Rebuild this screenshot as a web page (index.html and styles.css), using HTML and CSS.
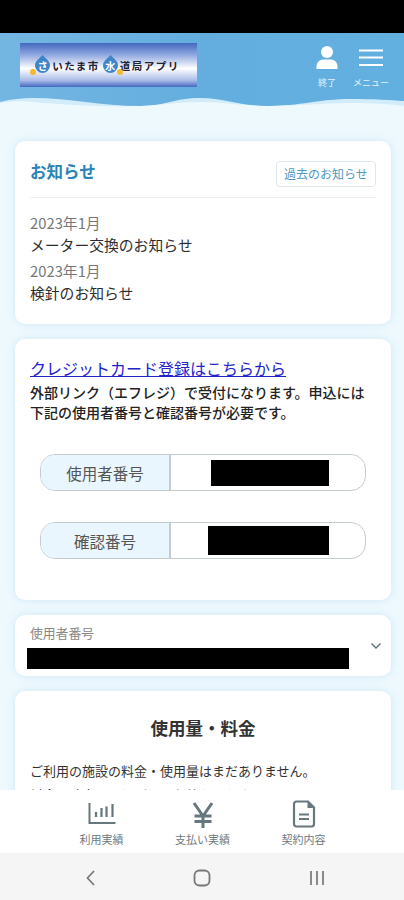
FILE: index.html
```html
<!DOCTYPE html>
<html lang="ja">

<head>
    <meta charset="UTF-8">
    <meta name="viewport" content="width=device-width, initial-scale=1.0">
    <title>さいたま市水道局アプリ</title>
    <link rel="stylesheet" href="styles.css">
</head>

<body>
    <div class="status-bar"></div>

    <header class="header">
        <div class="header-row">
            <div class="logo">
                <span class="drop drop-left">さ</span>
                <span>いたま市</span>
                <span class="drop drop-right">水</span>
                <span>道局アプリ</span>
            </div>
            <div class="header-actions">
                <div class="header-btn">
                    <svg width="24" height="24" viewBox="0 0 24 24">
                        <circle cx="12" cy="6" r="6" fill="#fff" />
                        <path d="M1.500 23c-.6-6 2.500-9.500 6.500-9.500h8c4 0 7.100 3.500 6.500 9.500z" fill="#fff" />
                    </svg>
                    <span>終了</span>
                </div>
                <div class="header-btn">
                    <svg width="24" height="24" viewBox="0 0 24 24">
                        <path d="M0 4.500h24M0 11.500h24M0 19h24" stroke="#fff" stroke-width="2" />
                    </svg>
                    <span>メニュー</span>
                </div>
            </div>
        </div>
        <svg class="wave" width="404" height="14" viewBox="0 0 404 14">
            <path d="M0 7C12 4 22 3 33 3c37 0 67 8 107 8 25 0 35-8 60-8 25 0 40 8 67 8 33 0 53-7 83-7 25 0 40 1 54 2v8H0z" fill="#d3ecf9" />
            <path d="M0 8c14-2 24-2 34-1 36 3 66 5 106 4 25-1 37-4 60-4 24 0 42 4 67 4 33 0 54-3 83-3 24 0 40 1 54 3v3H0z" fill="#eef9fe" />
        </svg>
    </header>

    <main class="content">
        <section class="card news">
            <div class="news-head">
                <h2>お知らせ</h2>
                <button class="past-btn">過去のお知らせ</button>
            </div>
            <div class="news-item">
                <p class="news-date">2023年1月</p>
                <p class="news-title">メーター交換のお知らせ</p>
            </div>
            <div class="news-item">
                <p class="news-date">2023年1月</p>
                <p class="news-title">検針のお知らせ</p>
            </div>
        </section>

        <section class="card credit">
            <a class="credit-link" href="#">クレジットカード登録はこちらから</a>
            <p class="credit-text">外部リンク（エフレジ）で受付になります。申込には下記の使用者番号と確認番号が必要です。</p>
            <div class="field">
                <div class="field-label">使用者番号</div>
                <div class="field-value"><span class="mask mask-user"></span></div>
            </div>
            <div class="field">
                <div class="field-label">確認番号</div>
                <div class="field-value"><span class="mask mask-confirm"></span></div>
            </div>
        </section>

        <section class="card selector">
            <div class="selector-main">
                <p class="selector-label">使用者番号</p>
                <div class="mask mask-select"></div>
            </div>
            <svg class="chevron" width="12" height="8" viewBox="0 0 12 8">
                <path d="M1.500 1.500L6 6l4.500-4.500" fill="none" stroke="#5f6f76" stroke-width="1.400" />
            </svg>
        </section>

        <section class="card usage">
            <h2>使用量・料金</h2>
            <p>ご利用の施設の料金・使用量はまだありません。</p>
            <p>料金の確定までしばらくお待ちください。</p>
        </section>
    </main>

    <nav class="tabbar">
        <div class="tab">
            <svg width="30" height="26" viewBox="0 0 30 26">
                <path d="M2.500 1v20h26" fill="none" stroke="#66777d" stroke-width="2" />
                <path d="M9 10v5M14.500 6v9M19.500 4.500V15M25.500 2v13" stroke="#66777d" stroke-width="2.200" />
            </svg>
            <span>利用実績</span>
        </div>
        <div class="tab">
            <svg width="30" height="26" viewBox="0 0 30 26">
                <path d="M6 1l9 13 9-13M15 14v12M6.500 14h17M6.500 19.500h17" fill="none" stroke="#66777d" stroke-width="3" />
            </svg>
            <span>支払い実績</span>
        </div>
        <div class="tab">
            <svg width="30" height="28" viewBox="0 0 30 28">
                <path d="M7.500 1.500H19l6 6V24a2.500 2.500 0 0 1-2.500 2.500h-15A2.500 2.500 0 0 1 5 24V4a2.500 2.500 0 0 1 2.500-2.500z" fill="none" stroke="#66777d" stroke-width="2.200" />
                <path d="M18.500 2v6h6z" fill="#66777d" />
                <path d="M10 14.500h10M10 19h10" fill="none" stroke="#66777d" stroke-width="2" />
            </svg>
            <span>契約内容</span>
        </div>
    </nav>

    <div class="system-nav">
        <svg width="12" height="18" viewBox="0 0 12 18">
            <path d="M10 2L3.500 9l6.500 7" fill="none" stroke="#777" stroke-width="1.700" />
        </svg>
        <svg width="18" height="18" viewBox="0 0 18 18">
            <rect x="1.500" y="1.500" width="15" height="15" rx="5" fill="none" stroke="#777" stroke-width="1.800" />
        </svg>
        <svg width="18" height="18" viewBox="0 0 18 18">
            <path d="M3 2v14M9 2v14M15 2v14" stroke="#777" stroke-width="1.700" />
        </svg>
    </div>
</body>

</html>
```

FILE: styles.css
```css
/* Basic reset */
* {
    margin: 0;
    padding: 0;
    box-sizing: border-box;
    font-family: "Noto Sans CJK JP", "Noto Sans", sans-serif;
}

html,
body {
    width: 404px;
    height: 900px;
    overflow: hidden;
}

body {
    display: flex;
    flex-direction: column;
    background-color: #eef9fe;
    color: #222;
}

.status-bar {
    flex: none;
    height: 33px;
    background-color: #000;
}

/* Header */
.header {
    flex: none;
    height: 76px;
    display: flex;
    flex-direction: column;
    justify-content: space-between;
    background: linear-gradient(90deg, #74b6e2, #63aedf 50%, #62b0e0);
}

.header-row {
    display: flex;
    justify-content: space-between;
    padding: 10px 15px 0 20px;
}

.logo {
    width: 177px;
    height: 44px;
    display: flex;
    align-items: center;
    justify-content: center;
    padding-right: 5px;
    padding-top: 1px;
    background: linear-gradient(180deg, #4468bf 0, #8aa3de 25%, #fff 58%, #a9bbe8 85%, #4468bf 100%);
    font-size: 10.500px;
    font-weight: 700;
    letter-spacing: 1.500px;
    color: #223;
    white-space: nowrap;
}

.drop {
    position: relative;
    width: 15px;
    height: 15px;
    margin: 0 2px 0 3px;
    display: flex;
    align-items: center;
    justify-content: center;
    font-size: 10px;
    letter-spacing: 0;
    color: #fff;
    z-index: 0;
}

.drop::before {
    content: "";
    position: absolute;
    inset: 0;
    background-color: #3f86c9;
    border-radius: 0 50% 50% 50%;
    transform: rotate(45deg);
    z-index: -1;
}

.drop::after {
    content: "";
    position: absolute;
    bottom: -2px;
    width: 6px;
    height: 6px;
    border-radius: 50%;
    background-color: #f5b82e;
}

.drop-left::after {
    left: -5px;
}

.drop-right::after {
    right: -5px;
}

.header-actions {
    display: flex;
    gap: 8px;
    padding-top: 3px;
}

.header-btn {
    width: 36px;
    display: flex;
    flex-direction: column;
    align-items: center;
    gap: 6px;
    font-size: 9px;
    line-height: 13px;
    color: #e4f3fb;
    white-space: nowrap;
}

.wave {
    display: block;
    flex: none;
}

/* Cards */
.content {
    flex: 1;
    min-height: 0;
    overflow: hidden;
    padding: 32px 13px 0 15px;
    display: flex;
    flex-direction: column;
    gap: 15px;
}

.card {
    flex: none;
    background-color: #fff;
    border-radius: 10px;
    box-shadow: 0 0 8px rgba(120, 180, 215, 0.25);
}

.news {
    height: 183px;
    padding: 15px 15px 0;
}

.news-head {
    display: flex;
    align-items: center;
    justify-content: space-between;
    height: 36px;
    padding-bottom: 5px;
    margin-bottom: 14px;
    border-bottom: 1px solid #eef1f3;
    box-sizing: content-box;
}

.news-head h2 {
    font-size: 16.500px;
    font-weight: 700;
    color: #2a84b8;
    margin-top: -6px;
}

.past-btn {
    height: 26px;
    width: 100px;
    margin-top: -1px;
    background-color: #fff;
    border: 1.500px solid #dde7ec;
    border-radius: 4px;
    font-size: 12px;
    color: #4f97bf;
}

.news-item {
    margin-bottom: 4px;
}

.news-date {
    font-size: 14.800px;
    line-height: 22px;
    color: #777;
}

.news-title {
    font-size: 14.800px;
    line-height: 22px;
    color: #2c2c2c;
}

.credit {
    height: 261px;
    padding: 16px 15px 0;
}

.credit-link {
    display: block;
    font-size: 16px;
    line-height: 27px;
    color: #2222cc;
    white-space: nowrap;
}

.credit-text {
    font-size: 14px;
    line-height: 20px;
    color: #222;
    font-weight: 500;
    margin-bottom: 32px;
}

.field {
    display: flex;
    height: 37px;
    margin: 0 10px 31px;
    border: 1.500px solid #c4ccd0;
    border-radius: 15px;
    overflow: hidden;
}

.field-label {
    width: 130px;
    flex: none;
    display: flex;
    align-items: center;
    justify-content: center;
    background-color: #eaf6fd;
    border-right: 2px solid #c4ccd0;
    font-size: 15.500px;
    color: #555;
}

.field-value {
    flex: 1;
    display: flex;
    align-items: center;
}

.mask {
    display: block;
    background-color: #000;
}

.mask-user {
    width: 118px;
    height: 26px;
    margin-left: 40px;
}

.mask-confirm {
    width: 121px;
    height: 29px;
    margin-left: 37px;
}

.selector {
    height: 61px;
    display: flex;
    align-items: flex-start;
    justify-content: space-between;
    padding: 10px 9px 0 12px;
}

.selector-label {
    margin-left: 3px;
    font-size: 12.800px;
    line-height: 16px;
    color: #888;
}

.selector-main .mask {
    margin-top: 7px;
}

.mask-select {
    width: 322px;
    height: 21px;
}

.chevron {
    margin-top: 17px;
}

.usage {
    height: 140px;
    padding: 0 15px;
}

.usage h2 {
    font-size: 17.500px;
    font-weight: 700;
    line-height: 24px;
    text-align: center;
    color: #333;
    margin: 25px 0 19px;
}

.usage p {
    font-size: 13px;
    line-height: 24px;
    color: #333;
}

/* Bottom tabs */
.tabbar {
    flex: none;
    height: 63px;
    background-color: #fff;
    display: flex;
    padding-left: 51px;
    position: relative;
}

.tab {
    width: 101px;
    display: flex;
    flex-direction: column;
    align-items: center;
    justify-content: flex-end;
    padding-bottom: 7px;
    gap: 4px;
    font-size: 11px;
    line-height: 14px;
    color: #6d7a80;
    white-space: nowrap;
}

/* Phone navigation */
.system-nav {
    flex: none;
    height: 47px;
    background-color: #f5f5f5;
    display: flex;
    align-items: center;
    padding: 3px 0 0 84px;
    gap: 97px;
}
```
